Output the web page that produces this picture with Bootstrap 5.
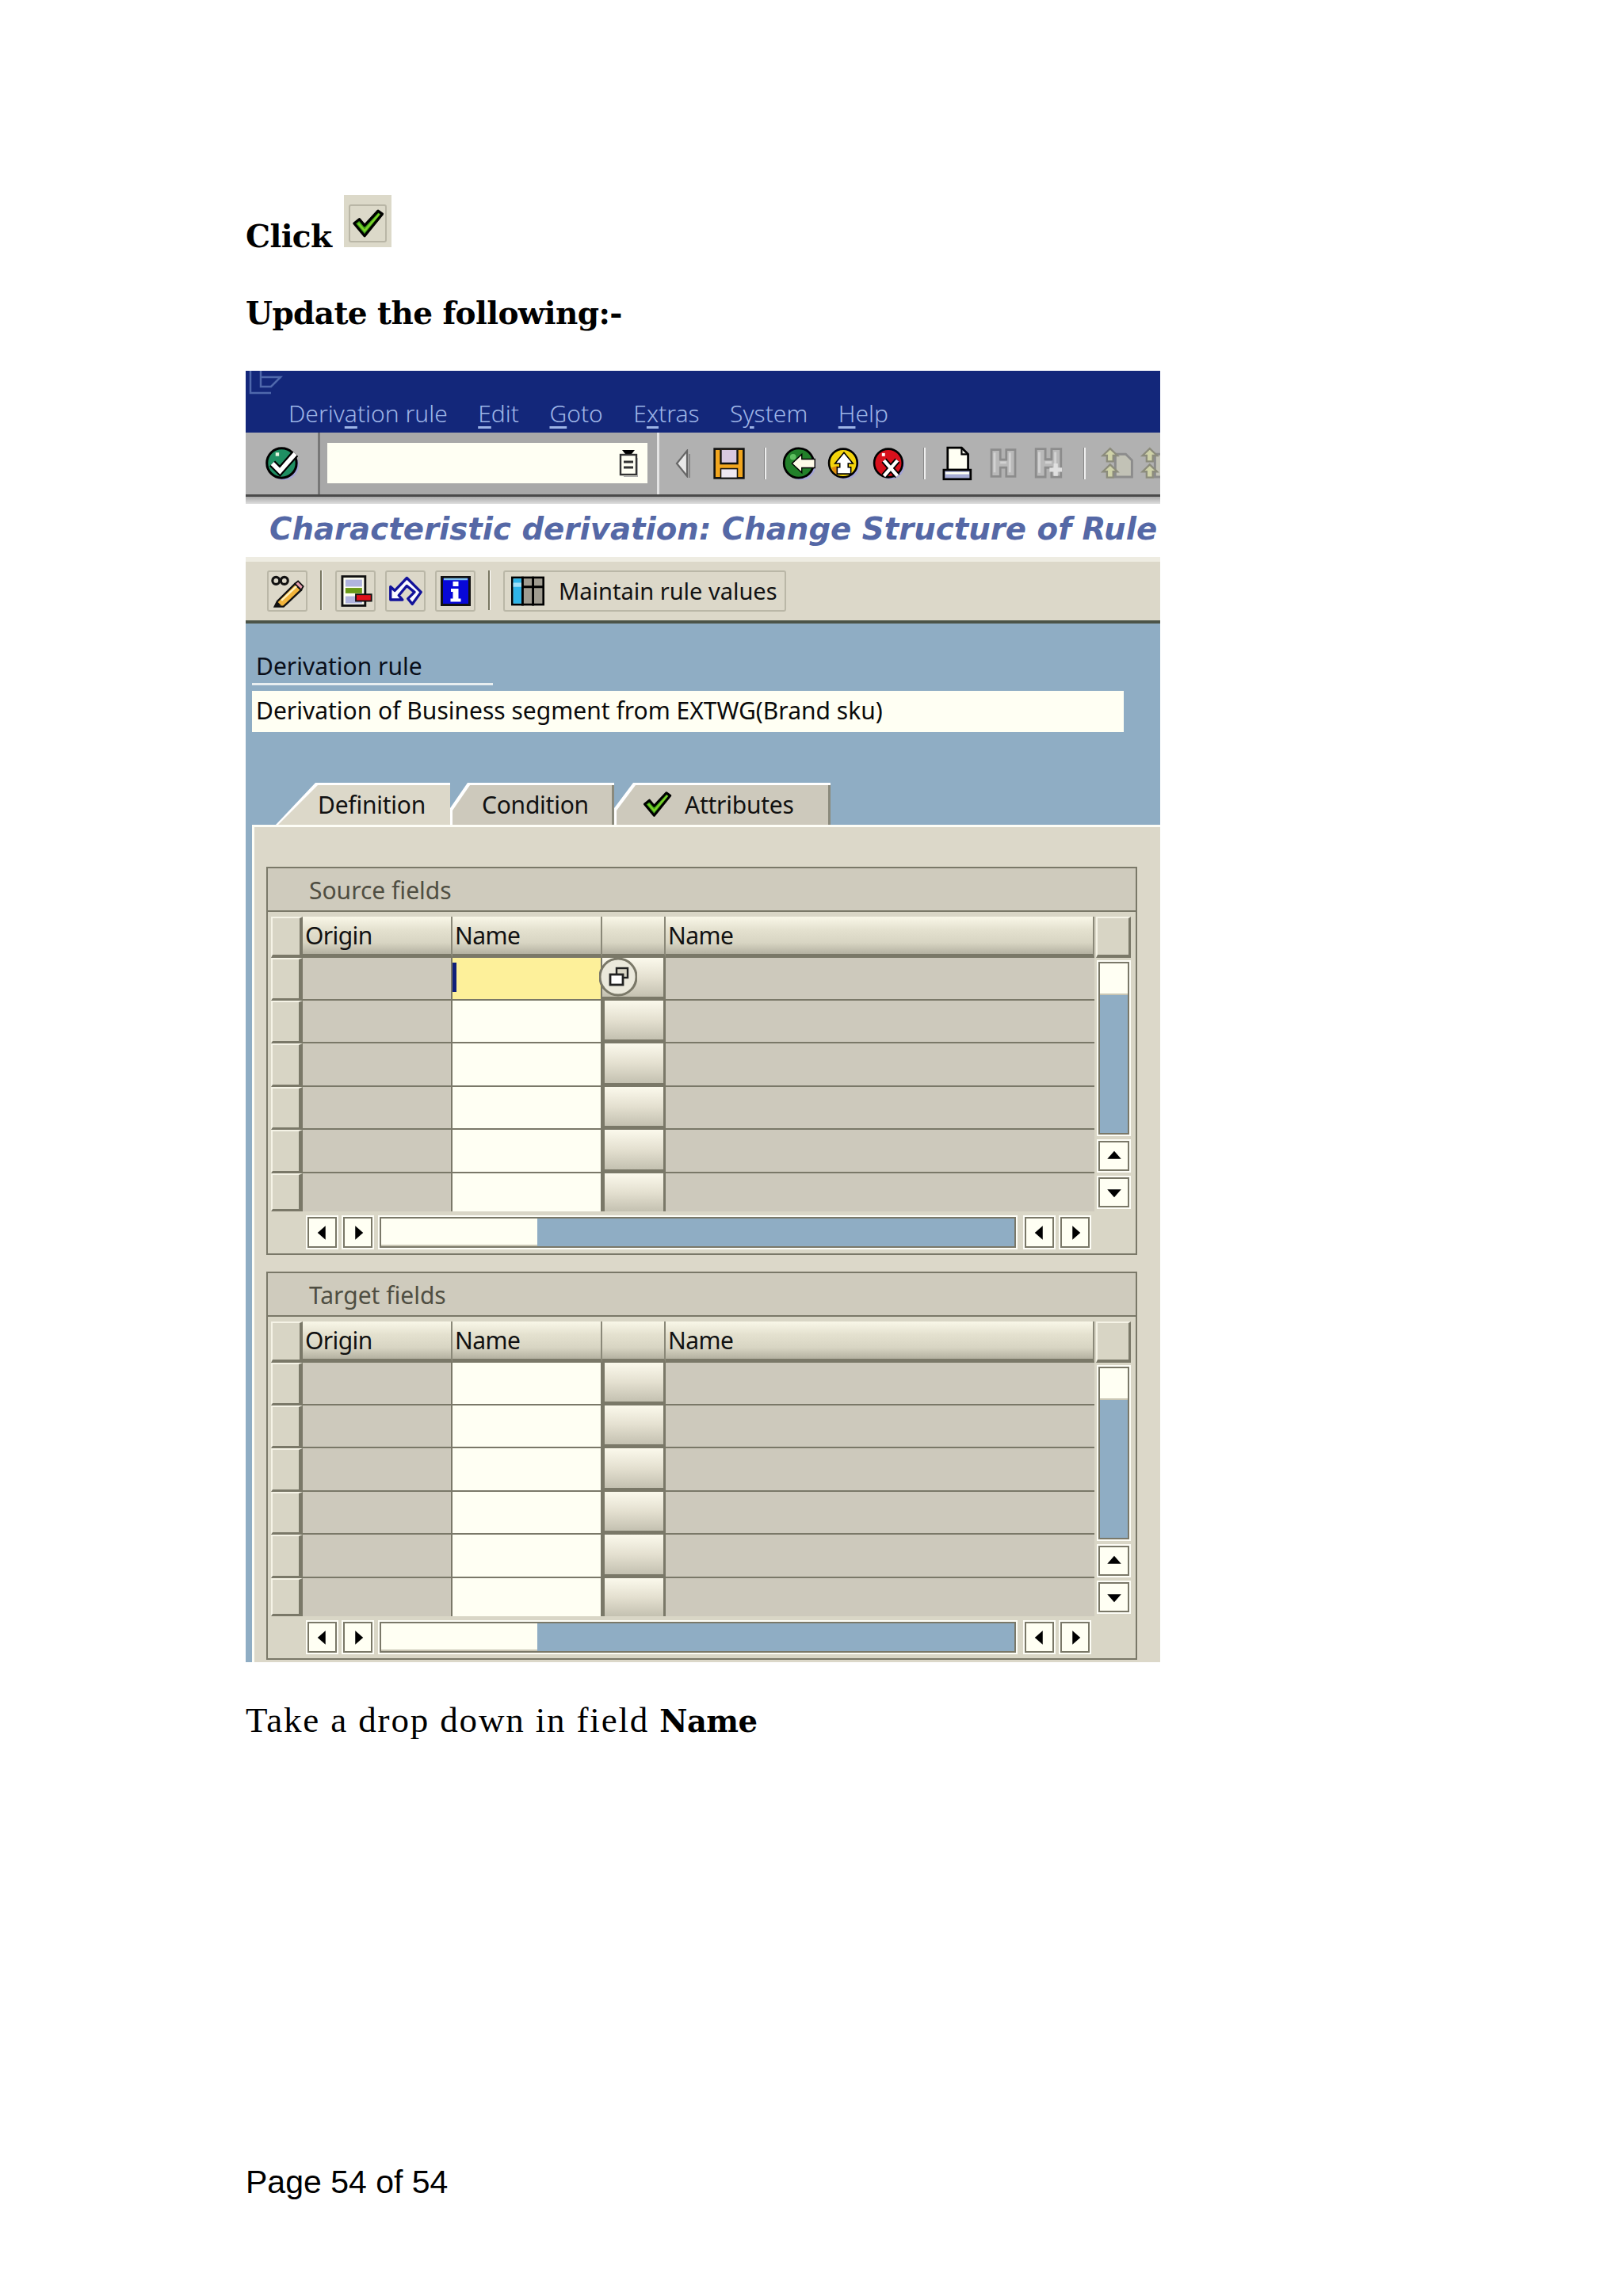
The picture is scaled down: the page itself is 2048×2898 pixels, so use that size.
<!DOCTYPE html>
<html lang="en">
<head>
    <meta charset="UTF-8">
    <meta name="viewport" content="width=device-width, initial-scale=1.0">
    <title>Page 54 of 54</title>
    <link href="https://cdn.jsdelivr.net/npm/bootstrap@5.3.0/dist/css/bootstrap.min.css" rel="stylesheet">
    <style>
        body { background: #fff; color: #000; }
        .doc-page { padding: 246px 0 0 310px; width: 2048px; height: 2898px; }
        .doc-bold { font-family: "DejaVu Serif", serif; font-weight: 700; font-size: 39px; line-height: 42px; letter-spacing: -.6px; }
        .doc-click { height: 66px; gap: 16px; }
        .doc-click span { margin-bottom: -7px; }
        .doc-check { width: 60px; height: 66px; background: #dcd9c9; padding: 12px 6px 6px 6px; }
        .doc-check div { width: 100%; height: 100%; border: 2px solid #b9b6a6; border-radius: 3px; }
        .doc-update { margin-top: 62px; }
        .doc-take { font-family: "Liberation Serif", serif; font-size: 45px; line-height: 50px; margin-top: 48px; letter-spacing: 1.85px; }
        .doc-take b { font-family: "DejaVu Serif", serif; font-size: 38.5px; letter-spacing: -.6px; }
        .doc-footer { font-family: "Liberation Sans", sans-serif; font-size: 41px; line-height: 48px; margin-top: 532px; }

        .sap-win { width: 1154px; margin-top: 52px; font-family: "Noto Sans", sans-serif; font-size: 30px; line-height: 36px; overflow: hidden; }
        .sap-menu { height: 78px; background: #13277a; color: #9db4e6; padding: 0 0 6px 54px; gap: 38.5px; font-weight: 300; position: relative; }
        .sap-menu u { text-underline-offset: 5px; }
        .sap-menu svg { position: absolute; left: 4px; top: -2px; }
        .sap-tools { height: 90px; background: linear-gradient(#b1b1b1 0, #b1b1b1 78px, #4a4a4a 78px, #4a4a4a 81px, #a9a9a9 81px, #dedede 90px); padding-bottom: 12px; }
        .sap-tools > div { flex: none; }
        .sap-okslot { width: 91px; }
        .sap-cmdfield { width: 431px; height: 100%; background: #a8a8a8; border-left: 3px solid #777; border-right: 3px solid #e4e4e4; padding: 13px 12px 13px 9px; }
        .sap-cmdinput { height: 51px; background: #fffff3; padding-right: 12px; }
        .sap-slot { display: flex; justify-content: center; }
        .sap-w28 { width: 28px; } .sap-w30 { width: 30px; } .sap-w36 { width: 36px; } .sap-w48 { width: 48px; }
        .sap-w52 { width: 52px; } .sap-w54 { width: 54px; } .sap-w56 { width: 56px; } .sap-w58 { width: 58px; } .sap-w60 { width: 60px; }
        .sap-sep { width: 3px; height: 40px; background: linear-gradient(90deg, #888 1px, #eee 1px); }
        .sap-title { height: 67px; background: #fff; color: #5568a6; font-family: "DejaVu Sans", sans-serif; font-weight: 700; font-style: italic; font-size: 38.7px; line-height: 63px; padding-left: 30px; white-space: nowrap; }
        .sap-apptools { height: 84px; background: #dcd8c9; border-top: 6px solid #eeece2; border-bottom: 4px solid #4c5448; padding: 11px 0 0 27px; }
        .sap-tbtn { height: 52px; width: 51px; border: 2px solid #bab7a7; border-radius: 3px; }
        .sap-tbtn-gap { margin-left: 12px; }
        .sap-tsep { width: 3px; height: 50px; background: linear-gradient(90deg, #77755f 2px, #fff 2px); }
        .sap-maintain { width: 357px; padding-left: 8px; gap: 18px; color: #111; font-size: 29px; white-space: nowrap; }
        .sap-body { background: #8fadc4; padding: 35px 0 0 8px; }
        .sap-label { width: 304px; height: 43px; padding: 0 0 0 5px; border-bottom: 3px solid #e8eef0; line-height: 38px; color: #0a0f1a; white-space: nowrap; }
        .sap-input { width: 1100px; height: 52px; margin-top: 7px; background: #fffff3; padding-left: 5px; line-height: 50px; color: #0a0a0a; }
        .sap-tabs { height: 53px; margin-top: 64px; padding-left: 30px; }
        .sap-tab { position: relative; height: 53px; background: #fff; line-height: 56px; color: #111; letter-spacing: -.25px; clip-path: polygon(var(--cut) 0, 100% 0, 100% 100%, 0 100%, 0 var(--low)); }
        .sap-tab::before { content: ""; position: absolute; inset: 3px 3px 0 3px; background: #cdc9bc; clip-path: polygon(var(--cut) 0, 100% 0, 100% 100%, 0 100%, 0 var(--low)); }
        .sap-tab::after { content: ""; position: absolute; top: 3px; bottom: 0; right: 0; width: 3px; background: #8b8a7c; }
        .sap-tab > * { position: relative; }
        .sap-tab-on::before { background: #dcd8c9; inset: 3px 0 0 3px; }
        .sap-tab-on::after { display: none; }
        .sap-tab-def { --cut: 50px; --low: 100%; width: 220px; padding-left: 53px; }
        .sap-tab-cond { --cut: 22px; --low: 32px; width: 207px; padding-left: 40px; }
        .sap-tab-attr { --cut: 24px; --low: 32px; width: 273px; padding-left: 35px; }
        .sap-panel { background: #dcd8c9; border-top: 3px solid #fdfdf6; border-left: 3px solid #fdfdf6; padding: 50px 29px 3px 15px; }
        .sap-group { border: 2px solid #7a7868; background: #d9d6c6; }
        .sap-group + .sap-group { margin-top: 21px; }
        .sap-grouphead { height: 55px; background: #cfcbbd; border-bottom: 2px solid #7a7868; padding-left: 52px; line-height: 55px; color: #4f4e42; }
        .sap-grid { display: grid; grid-template-columns: 40px 189px 189px 80px 541px 52px; grid-template-rows: 52px 54px 54px 55px 54px 55px 48px; margin: 6px 0 0 4px; }
        .sap-head { background: linear-gradient(#f9f7e8 0, #e4e1cf 35%, #d8d5c3 70%, #b4b1a1 100%); border-bottom: 5px solid #7a7868; border-right: 2px solid #8a8878; padding-left: 3px; line-height: 48px; color: #111; letter-spacing: -.6px; }
        .sap-corner { background: #d8d5c5; border: 2px solid #f5f3e6; border-right: 4px solid #7a7868; border-bottom: 4px solid #7a7868; }
        .sap-corner-end { margin-left: 2px; margin-right: 6px; border-right-width: 3px; }
        .sap-rowsel { background: #d8d5c5; border: 2px solid #f5f3e6; border-right: 5px solid #7a7868; border-bottom: 3px solid #7a7868; }
        .sap-ro { background: #cdc9bc; border-bottom: 2px solid #7a7868; border-right: 2px solid #7a7868; }
        .sap-ed { background: #fffff3; border-bottom: 2px solid #7a7868; border-right: 2px solid #7a7868; }
        .sap-ed-on { background: #fdf09a; }
        .sap-ed-on i { display: block; width: 5px; height: 37px; margin-top: 6px; background: #10207a; }
        .sap-f4 { background: linear-gradient(#fbf9ec 0, #e4e0d0 50%, #c4c1b1 100%); border: solid #7a7868; border-width: 0 3px 5px 3px; position: relative; }
        .sap-f4 svg { position: absolute; left: -4px; top: -1px; }
        .sap-f4-on { border-left: 0; }
        .sap-last { border-bottom: 0; }
        .sap-vscroll { grid-column: 6; grid-row: 2 / span 6; padding: 5px 8px 4px 5px; gap: 8px; }
        .sap-strack { height: 218px; background: #8fadc4; border: 2px solid #7a7868; outline: 2px solid #fdfdf6; }
        .sap-strack div { height: 40px; background: #fffff3; border-bottom: 2px solid #c9c6b4; }
        .sap-arrow { height: 38px; width: 39px; background: #fffff3; border: 2px solid #7a7868; outline: 2px solid #fdfdf6; flex: none; }
        .sap-hscroll { padding: 7px 0 0 50px; height: 53px; gap: 8px; }
        .sap-hscroll .sap-arrow { width: 37px; height: 39px; }
        .sap-htrack { width: 803px; height: 39px; background: #8fadc4; border: 2px solid #7a7868; outline: 2px solid #fdfdf6; margin: 0 3px 0 1px; }
        .sap-htrack div { width: 197px; height: 100%; background: #fffff3; border-bottom: 2px solid #c9c6b4; }
    </style>
</head>
<body>
    <svg width="0" height="0" class="d-block">
        <symbol id="ic-check" viewBox="0 0 16 16">
            <path d="M1.5 8 L4 6 L6.5 9 L13 2 L15 3.5 L6.5 14 Z" fill="#3fa31a" stroke="#000" stroke-width="1.3" stroke-linejoin="round"/>
            <path d="M3.5 8 L6.5 11.5 L13.5 3.5" fill="none" stroke="#7fd02c" stroke-width=".9"/>
        </symbol>
        <symbol id="ic-bino" viewBox="0 0 16 16">
            <path d="M2 1h4.5v5h3V1H14v13.5H9.5V10h-3v4.5H2z" fill="#b9b9b9" stroke="#8c8c8c" stroke-width="1.1"/>
            <path d="M3.6 2.5v10M11.3 2.5v10M6.5 7.5h3" stroke="#d2d2d2" stroke-width="1.1"/>
        </symbol>
        <symbol id="ic-up-gray" viewBox="0 0 16 16">
            <path d="M7 3.5h5l3 3v8H7z" fill="#c2c2b6" stroke="#8c8c8c" stroke-width="1.1"/>
            <path d="M4.5 .8 L8 4.2 H6 V7 H3 V4.2 H1z M4.5 8.5 L8 11.9 H6 V14.7 H3 V11.9 H1z" fill="#cfd2a8" stroke="#8c8c7c" stroke-width=".9"/>
        </symbol>
    </svg>
    <div class="doc-page">
        <div class="doc-bold doc-click d-flex align-items-end">
            <span>Click</span>
            <div class="doc-check"><div class="d-flex align-items-center justify-content-center">
                <svg width="42" height="42" viewBox="0 0 16 16"><use href="#ic-check"/></svg>
            </div></div>
        </div>
        <div class="doc-bold doc-update">Update the following:-</div>

        <div class="sap-win">
            <div class="sap-menu d-flex align-items-end">
                <svg width="44" height="32" viewBox="0 0 44 32" fill="none" stroke="#4f68ac" stroke-width="2.5"><path d="M2 0V30H28M15 0V22H28L40 10H15"/></svg>
                <span>Deriv<u>a</u>tion rule</span>
                <span><u>E</u>dit</span>
                <span><u>G</u>oto</span>
                <span>E<u>x</u>tras</span>
                <span>S<u>y</u>stem</span>
                <span><u>H</u>elp</span>
            </div>
            <div class="sap-tools d-flex align-items-center">
                <div class="sap-okslot d-flex justify-content-center">
                    <svg width="44" height="44" viewBox="0 0 16 16"><circle cx="8.8" cy="8.8" r="6.8" fill="#a3a3d8"/><circle cx="7.8" cy="7.8" r="6.8" fill="#1f8f63" stroke="#000" stroke-width="1.1"/><path d="M3.5 8 L7 11.5 L14 3.5" fill="none" stroke="#000" stroke-width="3.6"/><path d="M3.5 8 L7 11.5 L14 3.5" fill="none" stroke="#fff" stroke-width="2"/><rect x="5" y="3" width="1.6" height="1.6" fill="#e9f5e0"/></svg>
                </div>
                <div class="sap-cmdfield">
                    <div class="sap-cmdinput d-flex align-items-center justify-content-end">
                        <svg width="24" height="34" viewBox="0 0 12 17"><path d="M2 0h8L8 2.5H4z" fill="#000"/><rect x="1" y="3" width="10" height="12.5" fill="#fffff3" stroke="#333" stroke-width="1.2"/><path d="M3 7.5h6M3 11h6" stroke="#333" stroke-width="1.4"/><path d="M12 5v12H3" stroke="#aaa" fill="none"/></svg>
                    </div>
                </div>
                <div class="sap-slot sap-w58">
                    <svg width="20" height="36" viewBox="0 0 10 18"><path d="M8 1 L1.5 9 L8 17z" fill="#e8e8e8" stroke="#666" stroke-width="1.1"/><path d="M9.5 3v15" stroke="#888"/></svg>
                </div>
                <div class="sap-slot sap-w60">
                    <svg width="42" height="44" viewBox="0 0 16 16"><rect x="1" y="1" width="14" height="14" fill="#f2a61e" stroke="#111" stroke-width="1"/><rect x="4" y="1.5" width="8" height="6.5" fill="#d9c8e0"/><rect x="4" y="10.5" width="8" height="4.5" fill="#efe9f2" stroke="#111" stroke-width=".6"/><path d="M4 1.5v6.5h8V1.5" fill="none" stroke="#111" stroke-width=".9"/></svg>
                </div>
                <div class="sap-slot sap-w30"><div class="sap-sep"></div></div>
                <div class="sap-slot sap-w58">
                    <svg width="44" height="44" viewBox="0 0 16 16"><circle cx="8.6" cy="8.8" r="6.8" fill="#a3a3d8"/><circle cx="7.6" cy="7.8" r="6.8" fill="#22802a" stroke="#000" stroke-width="1"/><circle cx="5" cy="5" r="1.4" fill="#5fc060"/><path d="M4.5 8 L9 3.8V6H15V10H9V12.2z" fill="#fffbe8" stroke="#000" stroke-width=".5"/></svg>
                </div>
                <div class="sap-slot sap-w54">
                    <svg width="42" height="44" viewBox="0 0 16 16"><circle cx="8.6" cy="8.8" r="6.8" fill="#a3a3d8"/><circle cx="7.6" cy="7.8" r="6.8" fill="#f4d40c" stroke="#000" stroke-width="1"/><path d="M2 10a6 6 0 0 0 3 3.5L5 9z" fill="#e08a10"/><path d="M8 2.8 L12.3 8H10v1.8h1.3V13H4.7V9.8H6V8H3.7z" fill="#fff" stroke="#000" stroke-width=".6"/></svg>
                </div>
                <div class="sap-slot sap-w60">
                    <svg width="42" height="44" viewBox="0 0 16 16"><circle cx="8.6" cy="8.8" r="6.8" fill="#a3a3d8"/><circle cx="7.6" cy="7.8" r="6.8" fill="#d9101c" stroke="#000" stroke-width="1"/><rect x="4.5" y="3" width="1.5" height="1.5" fill="#fff"/><path d="M5.5 6.5 L12 14M12 6.5 L5.5 14" stroke="#000" stroke-width="3"/><path d="M5.5 6.5 L12 14M12 6.5 L5.5 14" stroke="#fff" stroke-width="1.6"/></svg>
                </div>
                <div class="sap-slot sap-w28"><div class="sap-sep"></div></div>
                <div class="sap-slot sap-w56">
                    <svg width="38" height="44" viewBox="0 0 14 16"><path d="M2.5 .7h6.5l3 3V11h-9.5z" fill="#fffff3" stroke="#000" stroke-width="1"/><path d="M9 .7v3h3" fill="none" stroke="#000" stroke-width=".8"/><rect x=".7" y="11" width="12.5" height="4.3" fill="#a6acd6" stroke="#000" stroke-width="1"/><rect x="1.5" y="12" width="11" height="1" fill="#fffff3"/></svg>
                </div>
                <div class="sap-slot sap-w60">
                    <svg width="40" height="44"><use href="#ic-bino"/></svg>
                </div>
                <div class="sap-slot sap-w54">
                    <svg width="42" height="44" viewBox="0 0 16 16"><use href="#ic-bino"/><path d="M11.5 8v6M8.5 11h6" stroke="#e0e0e0" stroke-width="2"/></svg>
                </div>
                <div class="sap-slot sap-w36"><div class="sap-sep"></div></div>
                <div class="sap-slot sap-w48">
                    <svg width="42" height="44"><use href="#ic-up-gray"/></svg>
                </div>
                <div class="sap-slot sap-w52">
                    <svg width="42" height="44"><use href="#ic-up-gray"/></svg>
                </div>
            </div>
            <div class="sap-title">Characteristic derivation: Change Structure of Rule</div>
            <div class="sap-apptools d-flex align-items-start">
                <div class="sap-tbtn d-flex align-items-center justify-content-center">
                    <svg width="42" height="42" viewBox="0 0 16 16"><circle cx="2.4" cy="3" r="1.7" fill="none" stroke="#111" stroke-width="1.2"/><circle cx="6.4" cy="3" r="1.7" fill="none" stroke="#111" stroke-width="1.2"/><path d="M3 13 L11.5 4.5 L14.5 7.5 L6 15.5 L1.8 15.5z" fill="#f2b43a" stroke="#111" stroke-width=".9"/><path d="M5 12.5 L12.5 5.5" stroke="#fff3c0" stroke-width=".9"/><path d="M11.5 4.5 L13 3.2 L15.5 5.8 L14.5 7.5z" fill="#e8a0b0" stroke="#111" stroke-width=".7"/><path d="M1.8 15.5L3 13 5 15z" fill="#111"/></svg>
                </div>
                <div class="sap-tsep ms-3"></div>
                <div class="sap-tbtn d-flex align-items-center justify-content-center ms-3">
                    <svg width="42" height="42" viewBox="0 0 16 16"><rect x="1.5" y="1" width="11" height="14" fill="#fffff3" stroke="#111" stroke-width="1.1"/><rect x="3" y="2.5" width="8" height="3.4" fill="#b0b4de"/><rect x="3" y="6.5" width="8" height="2.6" fill="#6a9a18"/><rect x="3" y="10.5" width="8" height="3.4" fill="#b0b4de"/><rect x="8" y="9.6" width="7.5" height="3.2" fill="#e0101a" stroke="#111" stroke-width=".7"/></svg>
                </div>
                <div class="sap-tbtn sap-tbtn-gap d-flex align-items-center justify-content-center">
                    <svg width="44" height="44" viewBox="0 0 16 16"><path d="M1 6 L1 12 L6.5 12 L4.8 10 L8.5 5.6 L12 8.5 L9 11.5 L11 14 L15 8.5 L8.5 2 L3 7.8z" fill="#fbfbff" stroke="#12129a" stroke-width="1.2" stroke-linejoin="round"/></svg>
                </div>
                <div class="sap-tbtn sap-tbtn-gap d-flex align-items-center justify-content-center">
                    <svg width="40" height="40" viewBox="0 0 16 16"><rect x="1" y="1" width="14" height="14" fill="#0808d8" stroke="#111" stroke-width="1.2"/><path d="M2 2h12" stroke="#7fc0f0"/><rect x="6.6" y="3.2" width="2.8" height="2.4" fill="#fff"/><path d="M5.6 6.8h3.8v5h1.2v1.6H5.4v-1.6h1.2V8.4h-1z" fill="#fff"/></svg>
                </div>
                <div class="sap-tsep ms-3"></div>
                <div class="sap-tbtn sap-maintain d-flex align-items-center ms-3">
                    <svg width="42" height="38" viewBox="0 0 16 14" class="flex-shrink-0"><rect x=".5" y=".5" width="15" height="13" fill="#a09c90" stroke="#000"/><rect x="1" y="1" width="4" height="12" fill="#2fb5e8"/><path d="M1 4h4" stroke="#9fe0f8" stroke-width="2"/><path d="M5.5 0v14M10.5 0v14M5.5 5h10" stroke="#000" stroke-width="1.1"/></svg>
                    <span>Maintain rule values</span>
                </div>
            </div>
            <div class="sap-body">
                <div class="sap-label">Derivation rule</div>
                <div class="sap-input">Derivation of Business segment from EXTWG(Brand sku)</div>
                <div class="sap-tabs d-flex">
                    <div class="sap-tab sap-tab-on sap-tab-def"><span>Definition</span></div>
                    <div class="sap-tab sap-tab-cond"><span>Condition</span></div>
                    <div class="sap-tab sap-tab-attr d-flex"><svg width="38" height="38" viewBox="0 0 16 16" class="mt-2"><use href="#ic-check"/></svg><span class="ms-3">Attributes</span></div>
                </div>
                <div class="sap-panel" id="panel"></div>
            </div>
        </div>

        <div class="doc-take">Take a drop down in field <b>Name</b></div>
        <div class="doc-footer">Page 54 of 54</div>
    </div>

    <script src="https://cdn.jsdelivr.net/npm/bootstrap@5.3.0/dist/js/bootstrap.bundle.min.js"></script>
    <script>
        const triangle = {
            up: 'M1 11 L8 3 L15 11z',
            down: 'M1 5 L8 13 L15 5z',
            left: 'M11 1 L3 8 L11 15z',
            right: 'M5 1 L13 8 L5 15z'
        };

        function arrow(dir) {
            return `<div class="sap-arrow d-flex align-items-center justify-content-center">
                <svg width="20" height="20" viewBox="0 0 16 16"><path d="${triangle[dir]}" fill="#000"/></svg></div>`;
        }

        function groupHtml(title, withCursor) {
            let rows = '';
            for (let r = 0; r < 6; r++) {
                const last = r === 5 ? ' sap-last' : '';
                const on = withCursor && r === 0;
                rows += `<div class="sap-rowsel"></div>
                    <div class="sap-ro${last}"></div>
                    <div class="sap-ed${last}${on ? ' sap-ed-on' : ''}">${on ? '<i></i>' : ''}</div>
                    <div class="sap-f4${last}${on ? ' sap-f4-on' : ''}">${on ? `<svg width="48" height="50" viewBox="0 0 24 25"><circle cx="12" cy="12.5" r="11.5" fill="#ebe9dc" stroke="#7a7868" stroke-width="1.5"/><rect x="11" y="7" width="7" height="6" fill="#d8d5c5" stroke="#222" stroke-width="1.2"/><rect x="7" y="11" width="8" height="6.5" fill="#fff" stroke="#222" stroke-width="1.4"/></svg>` : ''}</div>
                    <div class="sap-ro${last} border-end-0"></div>`;
                if (r === 0) {
                    rows += `<div class="sap-vscroll d-flex flex-column">
                        <div class="sap-strack"><div></div></div>${arrow('up')}${arrow('down')}</div>`;
                }
            }
            return `<div class="sap-group">
                <div class="sap-grouphead">${title}</div>
                <div class="sap-grid">
                    <div class="sap-corner"></div>
                    <div class="sap-head">Origin</div>
                    <div class="sap-head">Name</div>
                    <div class="sap-head"></div>
                    <div class="sap-head">Name</div>
                    <div class="sap-corner sap-corner-end"></div>
                    ${rows}
                </div>
                <div class="sap-hscroll d-flex">
                    ${arrow('left')}${arrow('right')}
                    <div class="sap-htrack"><div></div></div>
                    ${arrow('left')}${arrow('right')}
                </div>
            </div>`;
        }

        document.getElementById('panel').innerHTML =
            groupHtml('Source fields', true) + groupHtml('Target fields', false);
    </script>
</body>
</html>
